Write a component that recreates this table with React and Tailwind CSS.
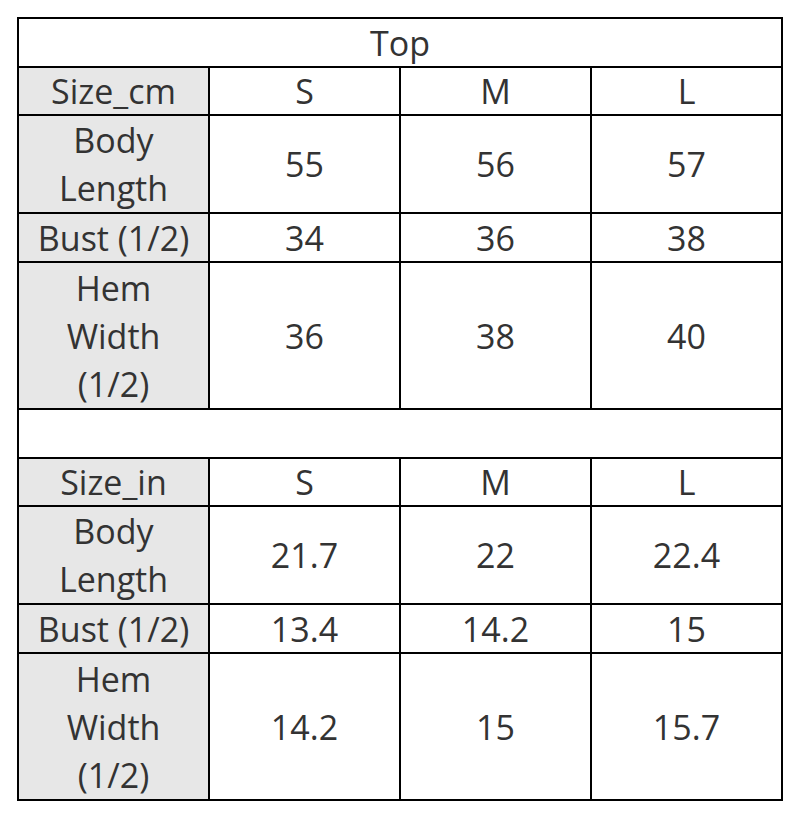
import React from "react";

const rowsCm = [
  { label: ["Size_cm"], vals: ["S", "M", "L"], h: "h-[46px]" },
  { label: ["Body", "Length"], vals: ["55", "56", "57"], h: "h-[96px]" },
  { label: ["Bust (1/2)"], vals: ["34", "36", "38"], h: "h-[47px]" },
  { label: ["Hem", "Width", "(1/2)"], vals: ["36", "38", "40"], h: "h-[145px]" },
];

const rowsIn = [
  { label: ["Size_in"], vals: ["S", "M", "L"], h: "h-[46px]" },
  { label: ["Body", "Length"], vals: ["21.7", "22", "22.4"], h: "h-[96px]" },
  { label: ["Bust (1/2)"], vals: ["13.4", "14.2", "15"], h: "h-[47px]" },
  { label: ["Hem", "Width", "(1/2)"], vals: ["14.2", "15", "15.7"], h: "h-[145px]" },
];

function Rows({ rows }) {
  return rows.map((row, i) => (
    <React.Fragment key={i}>
      <div className={`${row.h} bg-[#e7e7e7] flex flex-col items-center justify-center`}>
        {row.label.map((l) => (
          <div key={l} className="leading-[48px]">{l}</div>
        ))}
      </div>
      {row.vals.map((v, j) => (
        <div key={j} className={`${row.h} bg-white flex items-center justify-center`}>
          {v}
        </div>
      ))}
    </React.Fragment>
  ));
}

export default function App() {
  return (
    <div className="w-[800px] h-[818px] bg-white pt-[17px] pl-[17px]">
      <div
        className="grid grid-cols-[189px_189px_189px_189px] gap-[2px] bg-black p-[2px] w-[766px] text-[34px] text-[#333333] leading-[48px]"
        style={{ fontFamily: '"Open Sans", "Noto Sans", sans-serif' }}
      >
        <div className="col-span-4 h-[47px] bg-white flex items-center justify-center">Top</div>
        <Rows rows={rowsCm} />
        <div className="col-span-4 h-[47px] bg-white"></div>
        <Rows rows={rowsIn} />
      </div>
    </div>
  );
}
